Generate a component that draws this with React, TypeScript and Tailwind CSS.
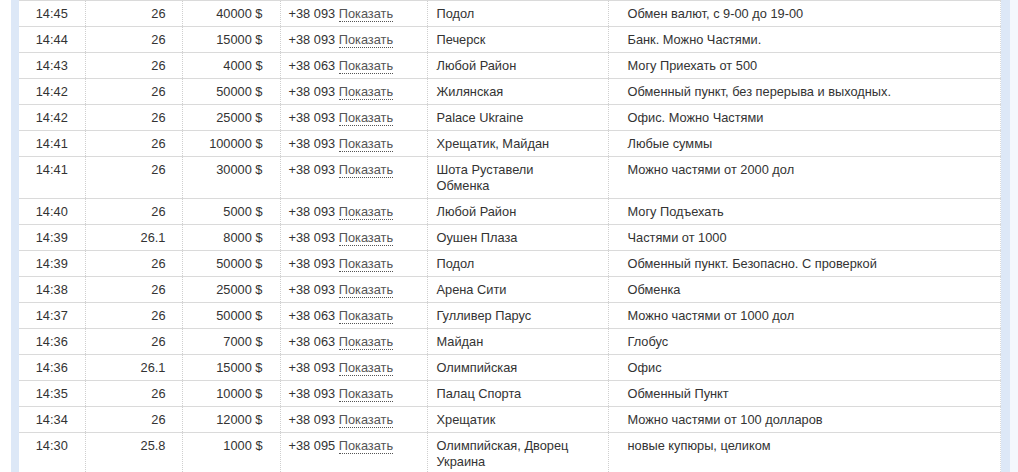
import React from "react";

type Row = {
  time: string;
  rate: string;
  amount: string;
  phone: string;
  place: string;
  note: string;
};

const rows: Row[] = [
  { time: "14:45", rate: "26", amount: "40000 $", phone: "+38 093", place: "Подол", note: "Обмен валют, с 9-00 до 19-00" },
  { time: "14:44", rate: "26", amount: "15000 $", phone: "+38 093", place: "Печерск", note: "Банк. Можно Частями." },
  { time: "14:43", rate: "26", amount: "4000 $", phone: "+38 063", place: "Любой Район", note: "Могу Приехать от 500" },
  { time: "14:42", rate: "26", amount: "50000 $", phone: "+38 093", place: "Жилянская", note: "Обменный пункт, без перерыва и выходных." },
  { time: "14:42", rate: "26", amount: "25000 $", phone: "+38 093", place: "Palace Ukraine", note: "Офис. Можно Частями" },
  { time: "14:41", rate: "26", amount: "100000 $", phone: "+38 093", place: "Хрещатик, Майдан", note: "Любые суммы" },
  { time: "14:41", rate: "26", amount: "30000 $", phone: "+38 093", place: "Шота Руставели Обменка", note: "Можно частями от 2000 дол" },
  { time: "14:40", rate: "26", amount: "5000 $", phone: "+38 093", place: "Любой Район", note: "Могу Подъехать" },
  { time: "14:39", rate: "26.1", amount: "8000 $", phone: "+38 093", place: "Оушен Плаза", note: "Частями от 1000" },
  { time: "14:39", rate: "26", amount: "50000 $", phone: "+38 093", place: "Подол", note: "Обменный пункт. Безопасно. С проверкой" },
  { time: "14:38", rate: "26", amount: "25000 $", phone: "+38 093", place: "Арена Сити", note: "Обменка" },
  { time: "14:37", rate: "26", amount: "50000 $", phone: "+38 063", place: "Гулливер Парус", note: "Можно частями от 1000 дол" },
  { time: "14:36", rate: "26", amount: "7000 $", phone: "+38 063", place: "Майдан", note: "Глобус" },
  { time: "14:36", rate: "26.1", amount: "15000 $", phone: "+38 093", place: "Олимпийская", note: "Офис" },
  { time: "14:35", rate: "26", amount: "10000 $", phone: "+38 093", place: "Палац Спорта", note: "Обменный Пункт" },
  { time: "14:34", rate: "26", amount: "12000 $", phone: "+38 093", place: "Хрещатик", note: "Можно частями от 100 долларов" },
  { time: "14:30", rate: "25.8", amount: "1000 $", phone: "+38 095", place: "Олимпийская, Дворец Украина", note: "новые купюры, целиком" },
];

const cell = "border-l border-dotted border-l-[#cfcfcf] align-top pt-[5px] pb-[4px] leading-4";

export default function App() {
  return (
    <div className="flex h-[472px] w-[1018px] overflow-hidden bg-white font-['Liberation_Sans',Arial,sans-serif] text-[12.8px] text-[#333]">
      <div className="w-[11px] shrink-0 bg-white" />
      <div className="w-[8px] shrink-0 bg-[#dde8f7]" />
      <div className="w-[982px] shrink-0 bg-white">
        <table className="w-full table-fixed border-collapse">
          <colgroup>
            <col className="w-[66px]" />
            <col className="w-[97px]" />
            <col className="w-[98px]" />
            <col className="w-[147px]" />
            <col className="w-[181px]" />
            <col />
          </colgroup>
          <tbody>
            {rows.map((r, i) => (
              <tr key={i} className="border-t border-[#dadada]">
                <td className="pt-[5px] pb-[4px] text-center align-top leading-4">{r.time}</td>
                <td className={`${cell} pr-4 text-right`}>{r.rate}</td>
                <td className={`${cell} pr-[17px] text-right`}>{r.amount}</td>
                <td className={`${cell} pl-[8px] whitespace-nowrap`}>
                  {r.phone}{" "}
                  <span className="border-b border-dotted border-[#555] text-[#555]">Показать</span>
                </td>
                <td className={`${cell} pl-[9px] pr-6`}>{r.place}</td>
                <td className={`${cell} border-r border-r-[#dadada] pl-[19px]`}>{r.note}</td>
              </tr>
            ))}
          </tbody>
        </table>
      </div>
      <div className="w-[9px] shrink-0 bg-[#dde8f7]" />
      <div className="flex-1 bg-[#f4f7fc]" />
    </div>
  );
}
